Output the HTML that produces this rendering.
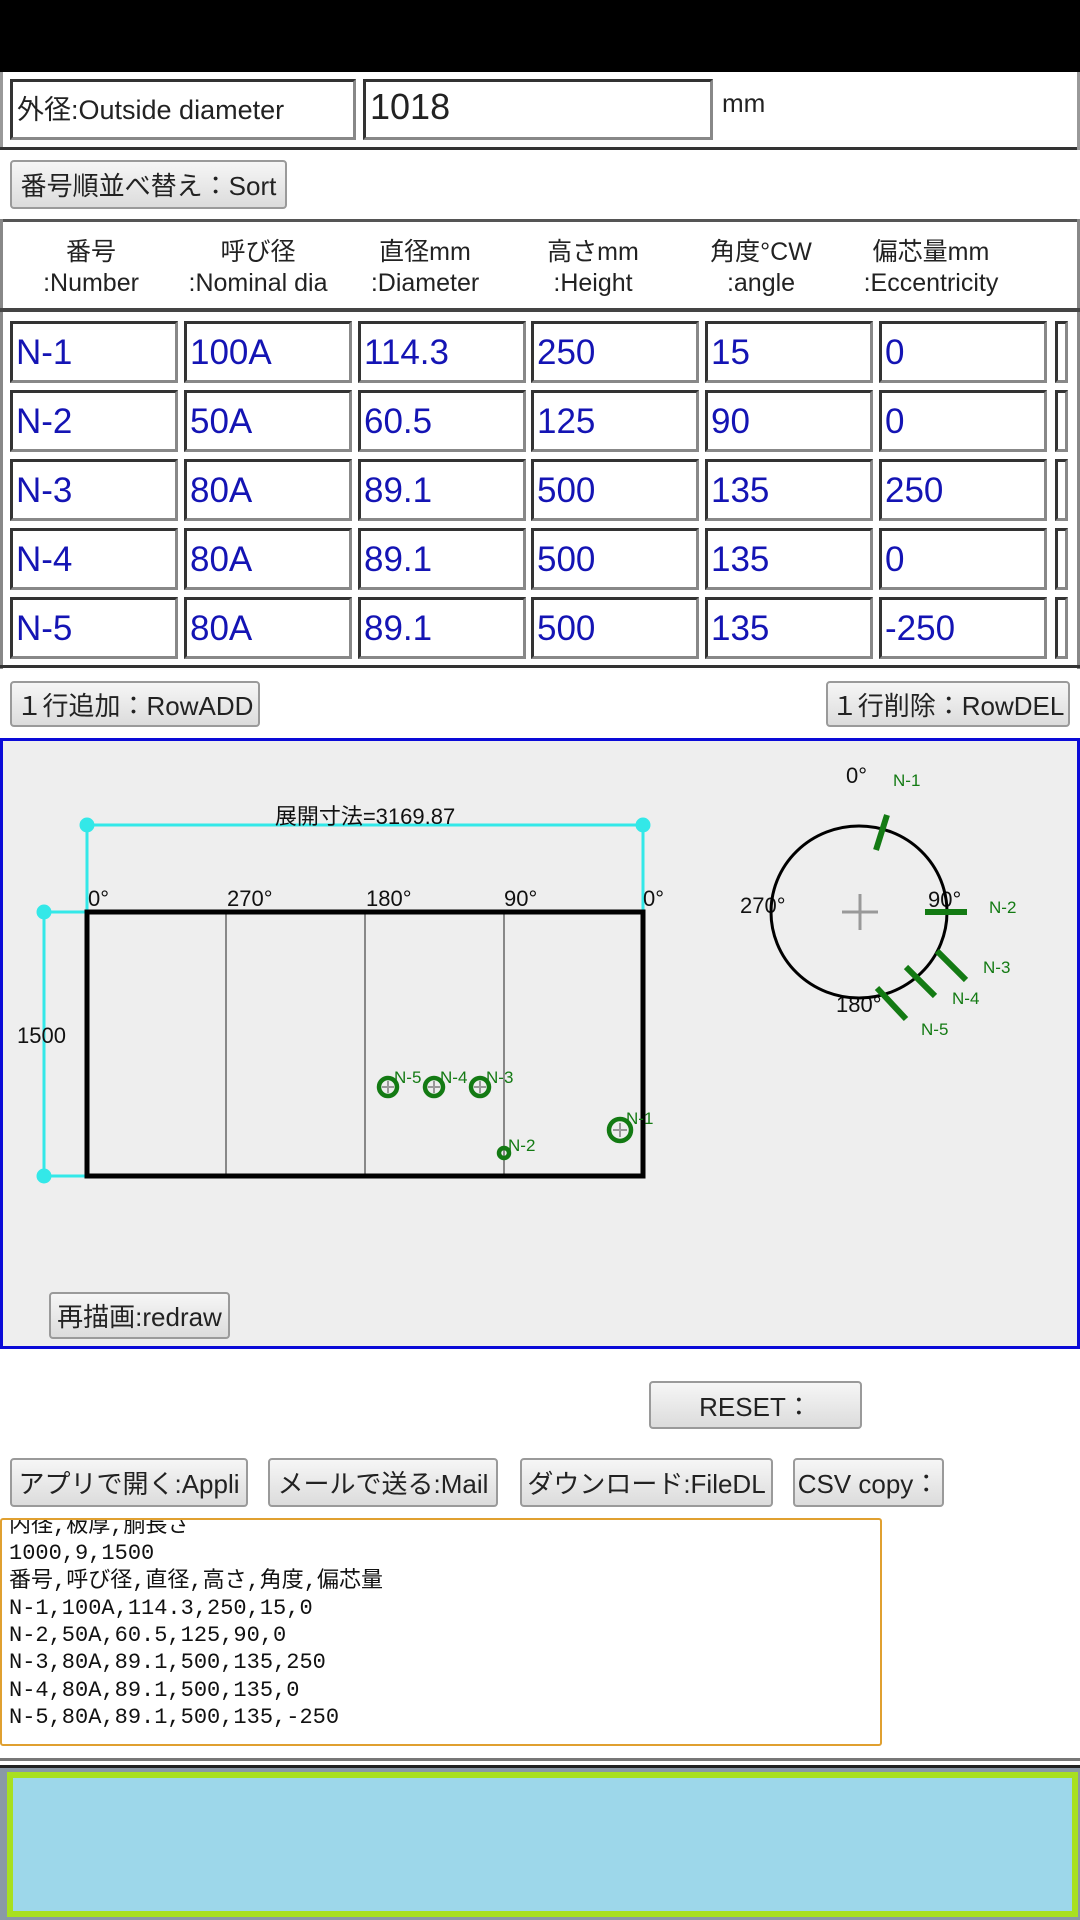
<!DOCTYPE html>
<html><head><meta charset="utf-8"><style>
*{box-sizing:border-box;margin:0;padding:0}
body{width:1080px;height:1920px;position:relative;background:#fff;font-family:"Liberation Sans","Noto Sans CJK JP",sans-serif;color:#222;overflow:hidden}
.a{position:absolute}
.box{position:absolute;border:3px solid;border-color:#333 #888 #888 #333;background:#fff;white-space:nowrap;overflow:hidden}
.btn{position:absolute;border:2px solid #9a9a9a;border-radius:4px;background:linear-gradient(#f6f6f6,#dcdcdc);font-size:26px;color:#222;display:flex;align-items:center;justify-content:center;white-space:nowrap;overflow:hidden}
.cell{font-size:35px;color:#1414b4;padding-left:3px;line-height:58px}
.hd{position:absolute;top:237px;width:174px;text-align:center;font-size:25px;line-height:31px;color:#222}
</style></head><body>
<div class="a" style="left:0;top:0;width:1080px;height:72px;background:#000"></div>
<div class="a" style="left:0;top:72px;width:3px;height:78px;background:#999"></div>
<div class="a" style="left:0;top:147px;width:1080px;height:3px;background:#333"></div>
<div class="a" style="right:0;top:72px;width:3px;height:78px;background:#999"></div>
<div class="box" style="left:10px;top:79px;width:346px;height:61px;font-size:27px;line-height:57px;padding-left:4px">外径:Outside diameter</div>
<div class="box" style="left:363px;top:79px;width:350px;height:61px;font-size:36px;line-height:50px;padding-left:4px">1018</div>
<div class="a" style="left:722px;top:88px;font-size:26px">mm</div>
<div class="btn" style="left:10px;top:160px;width:277px;height:49px">番号順並べ替え：Sort</div>

<div class="a" style="left:0;top:219px;width:1080px;height:3px;background:#555"></div>
<div class="a" style="left:0;top:219px;width:3px;height:450px;background:#888"></div>
<div class="a" style="right:0;top:219px;width:3px;height:450px;background:#888"></div>
<div class="a" style="left:0;top:308px;width:1080px;height:4px;background:#444"></div>
<div class="a" style="left:0;top:665px;width:1080px;height:3px;background:#333"></div>
<div class="hd" style="left:4px">番号<br>:Number</div>
<div class="hd" style="left:171px">呼び径<br>:Nominal dia</div>
<div class="hd" style="left:338px">直径mm<br>:Diameter</div>
<div class="hd" style="left:506px">高さmm<br>:Height</div>
<div class="hd" style="left:674px">角度°CW<br>:angle</div>
<div class="hd" style="left:844px">偏芯量mm<br>:Eccentricity</div>

<div id="rows"></div>
<div class="btn" style="left:10px;top:681px;width:250px;height:46px">１行追加：RowADD</div>
<div class="btn" style="left:826px;top:681px;width:244px;height:46px">１行削除：RowDEL</div>

<div class="a" style="left:0;top:738px;width:1080px;height:611px;border:3px solid #0a0ad8;background:#eeeeee"></div>
<svg class="a" style="left:0;top:0" width="1080" height="1920" font-family="Liberation Sans, Noto Sans CJK JP, sans-serif">
<g stroke="#33e8e8" stroke-width="3" fill="#33e8e8">
<line x1="87" y1="825" x2="643" y2="825"/><line x1="87" y1="825" x2="87" y2="912"/><line x1="643" y1="825" x2="643" y2="912"/>
<circle cx="87" cy="825" r="6"/><circle cx="643" cy="825" r="6"/>
<line x1="44" y1="912" x2="44" y2="1176"/><line x1="44" y1="912" x2="87" y2="912"/><line x1="44" y1="1176" x2="87" y2="1176"/>
<circle cx="44" cy="912" r="6"/><circle cx="44" cy="1176" r="6"/>
</g>
<text x="365" y="824" font-size="22" text-anchor="middle" fill="#111">展開寸法=3169.87</text>
<g stroke="#888" stroke-width="2"><line x1="226" y1="912" x2="226" y2="1176"/><line x1="365" y1="912" x2="365" y2="1176"/><line x1="504" y1="912" x2="504" y2="1176"/></g>
<rect x="87" y="912" width="556" height="264" fill="none" stroke="#000" stroke-width="5"/>
<g font-size="22" fill="#111"><text x="88" y="906">0°</text><text x="227" y="906">270°</text><text x="366" y="906">180°</text><text x="504" y="906">90°</text><text x="643" y="906">0°</text>
<text x="17" y="1043">1500</text>
<text x="846" y="783">0°</text><text x="740" y="913">270°</text><text x="928" y="907">90°</text><text x="836" y="1012">180°</text></g>
<g fill="none" stroke="#137a13" stroke-width="4.5">
<circle cx="388" cy="1087" r="9"/><circle cx="434" cy="1087" r="9"/><circle cx="480" cy="1087" r="9"/><circle cx="620" cy="1130" r="11"/><circle cx="504" cy="1153" r="5"/></g>
<g stroke="#999" stroke-width="2"><line x1="382" y1="1087" x2="394" y2="1087"/><line x1="388" y1="1081" x2="388" y2="1093"/><line x1="428" y1="1087" x2="440" y2="1087"/><line x1="434" y1="1081" x2="434" y2="1093"/><line x1="474" y1="1087" x2="486" y2="1087"/><line x1="480" y1="1081" x2="480" y2="1093"/><line x1="613" y1="1130" x2="627" y2="1130"/><line x1="620" y1="1123" x2="620" y2="1137"/></g>
<g font-size="17" fill="#137a13"><text x="394" y="1083">N-5</text><text x="440" y="1083">N-4</text><text x="486" y="1083">N-3</text><text x="626" y="1124">N-1</text><text x="508" y="1151">N-2</text>
<text x="893" y="786">N-1</text><text x="989" y="913">N-2</text><text x="983" y="973">N-3</text><text x="952" y="1004">N-4</text><text x="921" y="1035">N-5</text></g>
<ellipse cx="859" cy="912" rx="88" ry="86" fill="none" stroke="#000" stroke-width="3"/>
<g stroke="#999" stroke-width="3"><line x1="842" y1="912" x2="878" y2="912"/><line x1="860" y1="894" x2="860" y2="930"/></g>
<g stroke="#137a13" stroke-width="6"><line x1="887" y1="815" x2="876" y2="850"/><line x1="925" y1="912" x2="967" y2="912"/><line x1="937" y1="951" x2="966" y2="980"/><line x1="906" y1="967" x2="935" y2="996"/><line x1="877" y1="988" x2="906" y2="1019"/></g>
</svg>
<div class="btn" style="left:49px;top:1292px;width:181px;height:47px;font-size:26px">再描画:redraw</div>

<div class="btn" style="left:649px;top:1381px;width:213px;height:48px">RESET：</div>
<div class="btn" style="left:10px;top:1458px;width:238px;height:49px">アプリで開く:Appli</div>
<div class="btn" style="left:268px;top:1458px;width:230px;height:49px">メールで送る:Mail</div>
<div class="btn" style="left:520px;top:1458px;width:253px;height:49px">ダウンロード:FileDL</div>
<div class="btn" style="left:793px;top:1458px;width:151px;height:49px">CSV copy：</div>

<div class="a" style="left:0;top:1518px;width:882px;height:228px;border:2px solid #e0a030;border-radius:3px;background:#fff;overflow:hidden">
<pre style="font-family:'Liberation Mono','Noto Sans CJK JP',monospace;font-size:22px;line-height:27.3px;padding-left:7px;margin-top:-7px;color:#111">内径,板厚,胴長さ
1000,9,1500
番号,呼び径,直径,高さ,角度,偏芯量
N-1,100A,114.3,250,15,0
N-2,50A,60.5,125,90,0
N-3,80A,89.1,500,135,250
N-4,80A,89.1,500,135,0
N-5,80A,89.1,500,135,-250</pre></div>

<div class="a" style="left:0;top:1758px;width:1080px;height:10px;border-top:3px solid #777;border-bottom:3px solid #222;background:#fff"></div>
<div class="a" style="left:0;top:1768px;width:1080px;height:152px;background:#8a99a6"></div>
<div class="a" style="left:7px;top:1772px;width:1071px;height:145px;border:6px solid #a8e020;background:#9dd7ea"></div>

<script>
var d=[["N-1","100A","114.3","250","15","0"],["N-2","50A","60.5","125","90","0"],["N-3","80A","89.1","500","135","250"],["N-4","80A","89.1","500","135","0"],["N-5","80A","89.1","500","135","-250"]];
var xs=[10,184,358,531,705,879],h="";
d.forEach(function(r,i){var y=321+i*69;r.forEach(function(v,j){h+='<div class="box cell" style="left:'+xs[j]+'px;top:'+y+'px;width:168px;height:62px">'+v+'</div>';});h+='<div class="box" style="left:1055px;top:'+y+'px;width:13px;height:62px"></div>';});
document.getElementById("rows").innerHTML=h;
</script>
</body></html>
